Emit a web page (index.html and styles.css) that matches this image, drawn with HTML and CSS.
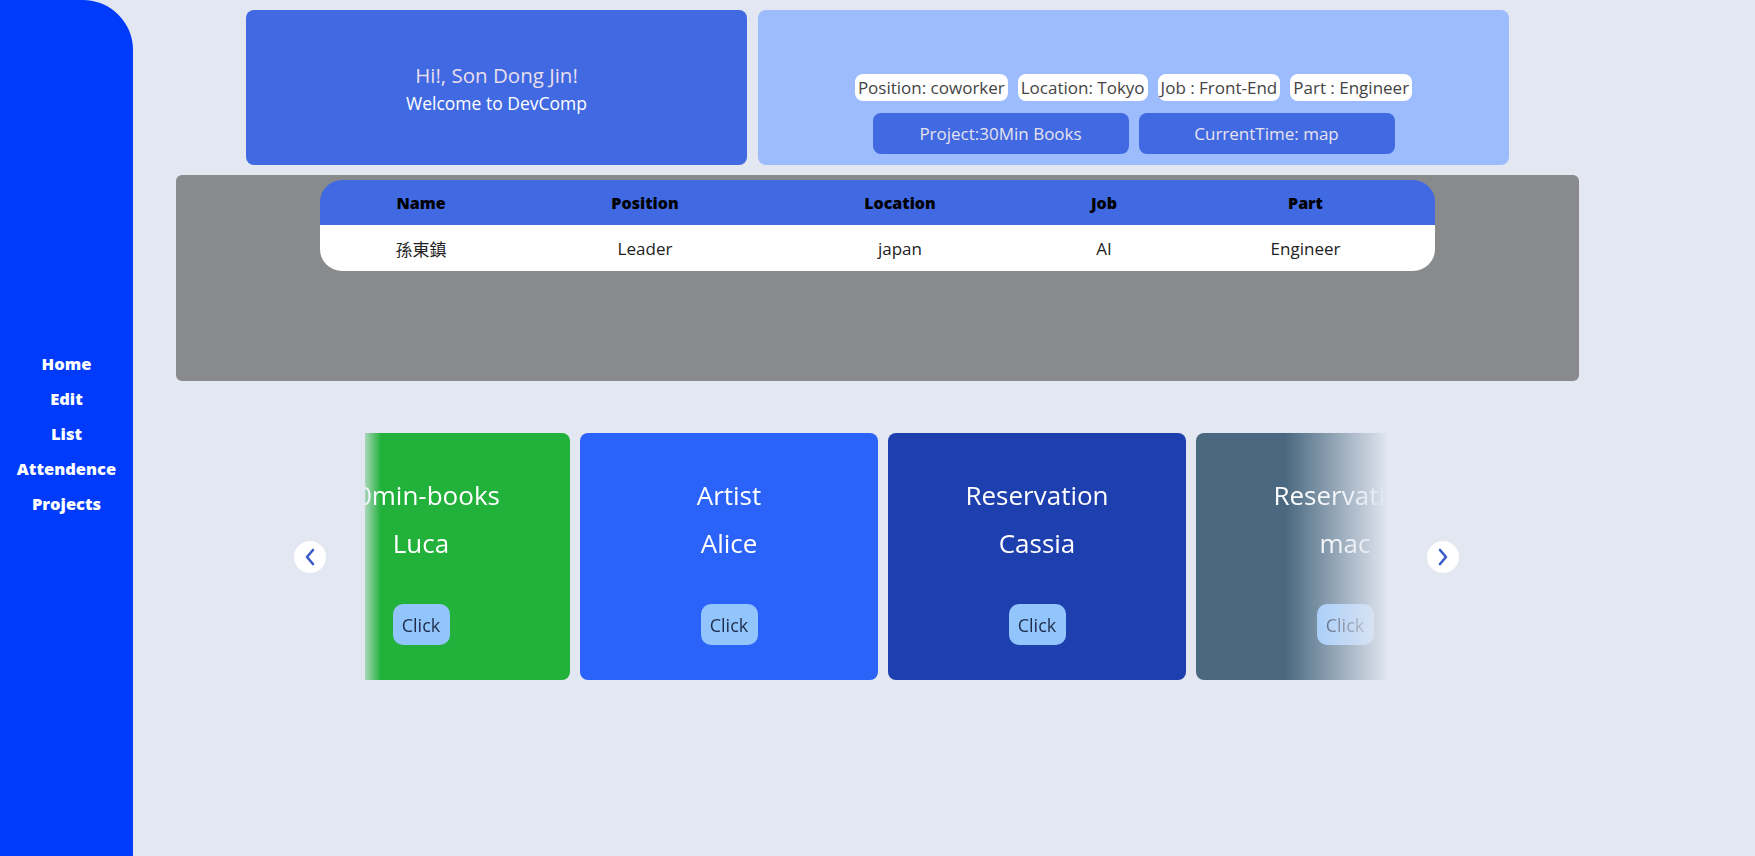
FILE: index.html
```html
<!DOCTYPE html>
<html lang="en">
  <head>
    <meta charset="UTF-8" />
    <meta name="viewport" content="width=device-width, initial-scale=1.0" />
    <title>DevComp</title>
    <link rel="stylesheet" href="styles.css">
  </head>
  <body>
    <!-- Sidebar -->
    <nav class="sidebar">
      <a href="#">Home</a>
      <a href="#">Edit</a>
      <a href="#">List</a>
      <a href="#">Attendence</a>
      <a href="#">Projects</a>
    </nav>

    <main class="main">
      <div class="top-row">
        <div class="greeting">
          <p class="hi">Hi!, Son Dong Jin!</p>
          <p class="welcome">Welcome to DevComp</p>
        </div>

        <div class="info">
          <div class="chips">
            <span class="chip">Position: coworker</span>
            <span class="chip">Location: Tokyo</span>
            <span class="chip">Job : Front-End</span>
            <span class="chip">Part : Engineer</span>
          </div>
          <div class="info-buttons">
            <button class="info-btn">Project:30Min Books</button>
            <button class="info-btn">CurrentTime: map</button>
          </div>
        </div>
      </div>

      <!-- Members -->
      <div class="panel">
        <table class="members">
          <thead>
            <tr>
              <th class="c-name">Name</th>
              <th class="c-pos">Position</th>
              <th class="c-loc">Location</th>
              <th class="c-job">Job</th>
              <th class="c-part">Part</th>
            </tr>
          </thead>
          <tbody>
            <tr>
              <td>孫東鎮</td>
              <td>Leader</td>
              <td>japan</td>
              <td>AI</td>
              <td>Engineer</td>
            </tr>
          </tbody>
        </table>
      </div>

      <!-- Projects carousel -->
      <div class="carousel">
        <button class="arrow">
          <svg width="14" height="18" viewBox="0 0 14 18"><path d="M10 2 L4 9 L10 16" fill="none" stroke="#3a5bc9" stroke-width="2.6" stroke-linecap="round" stroke-linejoin="round"/></svg>
        </button>

        <div class="viewport">
          <div class="track">
            <div class="card card-green">
              <p class="card-title">30min-books</p>
              <p class="card-name">Luca</p>
              <button class="click">Click</button>
            </div>
            <div class="card card-blue">
              <p class="card-title">Artist</p>
              <p class="card-name">Alice</p>
              <button class="click">Click</button>
            </div>
            <div class="card card-navy">
              <p class="card-title">Reservation</p>
              <p class="card-name">Cassia</p>
              <button class="click">Click</button>
            </div>
            <div class="card card-slate">
              <p class="card-title">Reservation</p>
              <p class="card-name">mac</p>
              <button class="click">Click</button>
            </div>
          </div>
        </div>

        <button class="arrow">
          <svg width="14" height="18" viewBox="0 0 14 18"><path d="M4 2 L10 9 L4 16" fill="none" stroke="#3a5bc9" stroke-width="2.6" stroke-linecap="round" stroke-linejoin="round"/></svg>
        </button>
      </div>
    </main>
  </body>
</html>
```

FILE: styles.css
```css
body {
  margin: 0;
  display: flex;
  height: 856px;
  overflow: hidden;
  background-color: #e2e7f1;
  font-family: "Open Sans", Arial, sans-serif;
}
p {
  margin: 0;
}
button {
  font-family: inherit;
  border: none;
  cursor: pointer;
}

/* sidebar */
.sidebar {
  width: 133px;
  flex-shrink: 0;
  height: 100%;
  background-color: #003bfb;
  border-top-right-radius: 50px;
  display: flex;
  flex-direction: column;
  align-items: center;
  justify-content: center;
  gap: 11px;
  padding-top: 12px;
  box-sizing: border-box;
}
.sidebar a {
  color: #fff;
  text-decoration: none;
  font-weight: 800;
  font-size: 16.5px;
  line-height: 24px;
}

/* main */
.main {
  flex: 1;
  padding-top: 10px;
}
.top-row {
  display: flex;
  gap: 11px;
  margin-left: 113px;
}
.greeting {
  width: 501px;
  height: 155px;
  background-color: #4169e1;
  border-radius: 8px;
  display: flex;
  flex-direction: column;
  align-items: center;
  justify-content: center;
  gap: 2px;
}
.hi {
  color: #e8dfee;
  font-size: 20.5px;
}
.welcome {
  color: #fff;
  font-size: 17.5px;
}
.info {
  width: 751px;
  height: 155px;
  background-color: #9cbcfd;
  border-radius: 8px;
  display: flex;
  flex-direction: column;
  align-items: center;
  justify-content: flex-end;
  padding-bottom: 11px;
  box-sizing: border-box;
  gap: 12px;
}
.chips {
  display: flex;
  gap: 10px;
}
.chip {
  background-color: #fff;
  color: #444;
  border-radius: 8px;
  padding: 0 3px;
  height: 27px;
  line-height: 27px;
  font-size: 17px;
}
.info-buttons {
  display: flex;
  gap: 10px;
}
.info-btn {
  width: 256px;
  height: 41px;
  background-color: #4169e1;
  color: #e6e3ee;
  border-radius: 8px;
  font-size: 17px;
}

/* members table */
.panel {
  margin: 10px 0 0 43px;
  width: 1403px;
  height: 206px;
  background-color: #898a8c;
  border-radius: 6px;
  padding-top: 5px;
  box-sizing: border-box;
}
.members {
  width: 1115px;
  margin: 0 auto;
  border-collapse: collapse;
  border-radius: 22px;
  overflow: hidden;
  table-layout: fixed;
}
.members th {
  background-color: #4169e1;
  color: #000;
  font-weight: 800;
  font-size: 16px;
  height: 45px;
  padding: 0;
}
.members td {
  background-color: #fff;
  color: #222;
  font-size: 17px;
  text-align: center;
  height: 46px;
  padding: 0;
  font-family: "Open Sans", "Noto Sans CJK TC", sans-serif;
}
.c-name { width: 202px; }
.c-pos { width: 246px; }
.c-loc { width: 264px; }
.c-job { width: 144px; }
.c-part { width: 259px; }

/* carousel */
.carousel {
  display: flex;
  align-items: center;
  gap: 39px;
  margin: 52px 0 0 161px;
}
.arrow {
  width: 32px;
  height: 32px;
  border-radius: 50%;
  background-color: #fff;
  display: flex;
  align-items: center;
  justify-content: center;
  padding: 0;
}
.viewport {
  width: 1023px;
  overflow: hidden;
  -webkit-mask-image: linear-gradient(to right, rgba(0, 0, 0, 0.3) 0, #000 16px, #000 calc(100% - 102px), transparent 100%);
  mask-image: linear-gradient(to right, rgba(0, 0, 0, 0.3) 0, #000 16px, #000 calc(100% - 102px), transparent 100%);
}
.track {
  display: flex;
  gap: 10px;
  margin-left: -93px;
}
.card {
  flex-shrink: 0;
  width: 298px;
  height: 247px;
  border-radius: 8px;
  color: #fff;
  display: flex;
  flex-direction: column;
  align-items: center;
  padding-top: 45px;
  box-sizing: border-box;
}
.card-title {
  font-size: 26px;
  line-height: 34px;
}
.card-name {
  font-size: 26px;
  line-height: 34px;
  margin-top: 14px;
}
.click {
  margin-top: 44px;
  width: 57px;
  height: 41px;
  border-radius: 10px;
  background-color: #93c5fd;
  color: #1f2d4a;
  font-size: 18px;
  padding: 0;
}
.card-green { background-color: #22b13a; }
.card-blue { background-color: #2b63f8; }
.card-navy { background-color: #1e3fae; }
.card-slate { background-color: #4a6980; }
```
